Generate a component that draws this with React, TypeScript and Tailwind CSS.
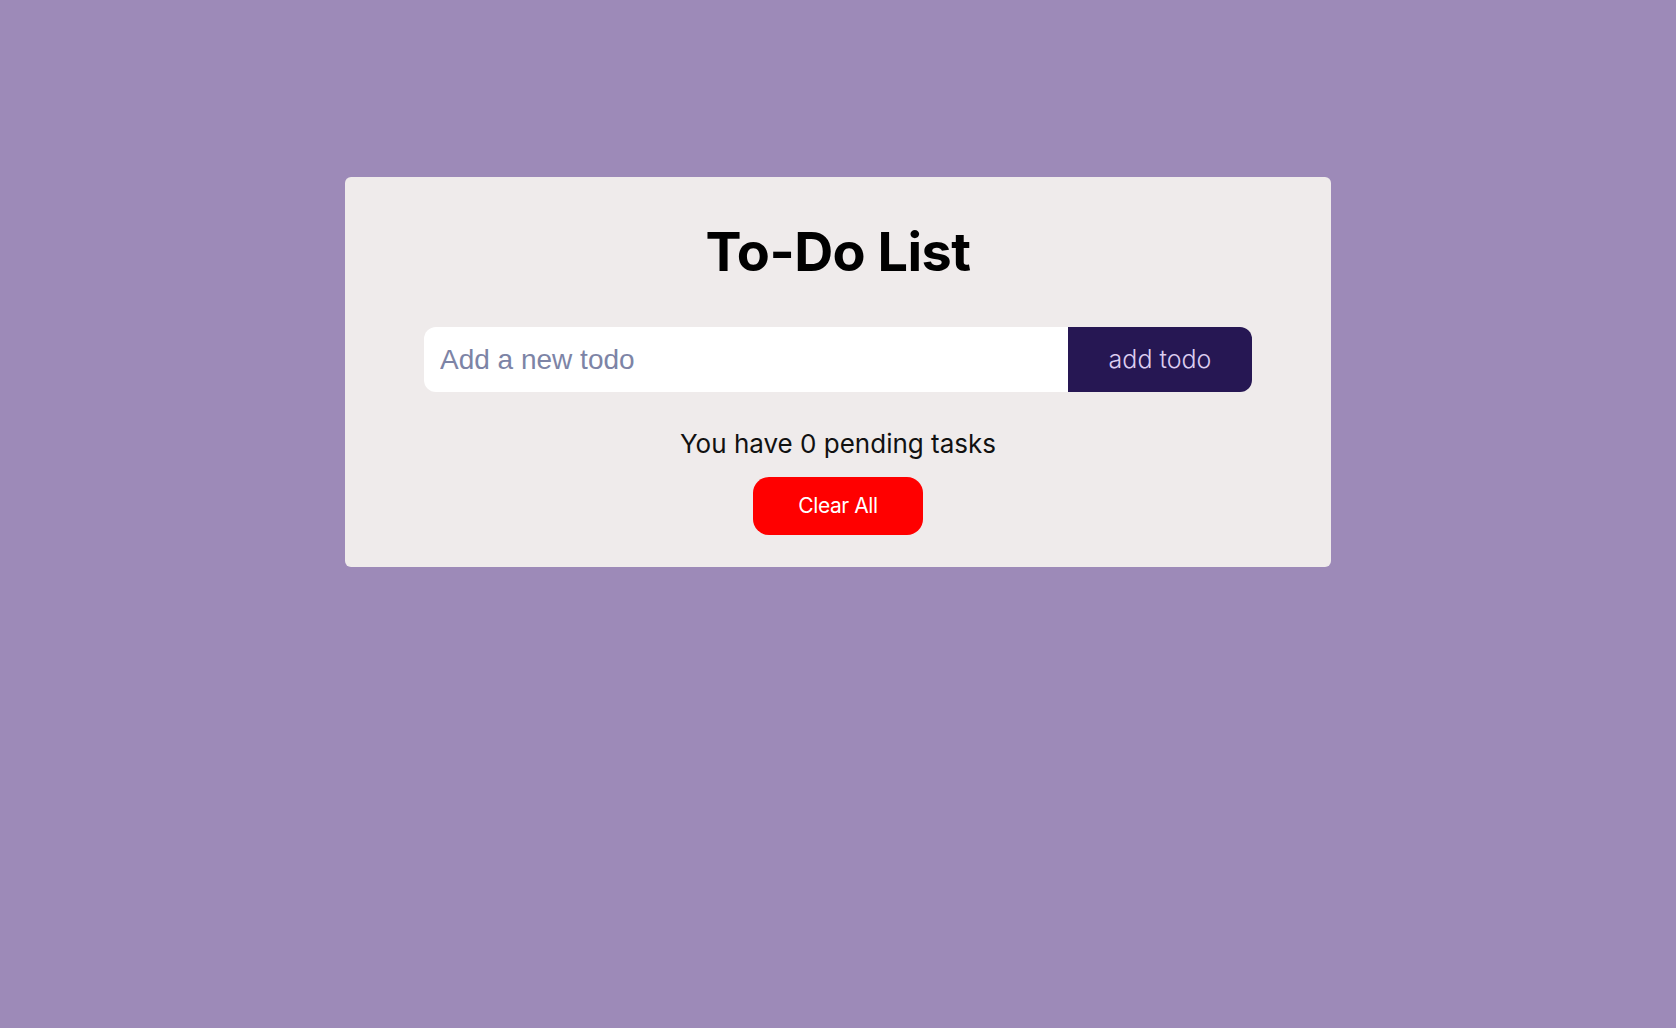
import React from "react";

export default function App() {
  return (
    <div className="min-h-screen w-full bg-[#9d8ab8] flex justify-center pt-[177px]" style={{ fontFamily: "Inter, 'Noto Sans', sans-serif" }}>
      <div className="w-[986px] h-[390px] bg-[#efebeb] rounded-md flex flex-col items-center pt-[42px]">
        <h1 className="text-[54px] leading-[65px] font-bold text-black tracking-[-0.01em]">To-Do List</h1>
        <div className="mt-[43px] flex w-[828px] h-[65px]">
          <input
            className="flex-1 h-full bg-white rounded-l-xl pl-4 text-[28px] outline-none placeholder:text-[#7d84a6]"
            style={{ fontFamily: "'Liberation Sans', Arial, sans-serif" }}
            placeholder="Add a new todo"
          />
          <button className="w-[184px] h-full bg-[#261753] rounded-r-xl text-[25px] font-light text-[#dccdf0]">
            add todo
          </button>
        </div>
        <p className="mt-[36px] text-[26px] leading-[31px] text-[#111]">You have 0 pending tasks</p>
        <button className="mt-[18px] w-[170px] h-[58px] rounded-2xl bg-[#ff0000] text-white text-[21px] tracking-[-0.02em]">
          Clear All
        </button>
      </div>
    </div>
  );
}
